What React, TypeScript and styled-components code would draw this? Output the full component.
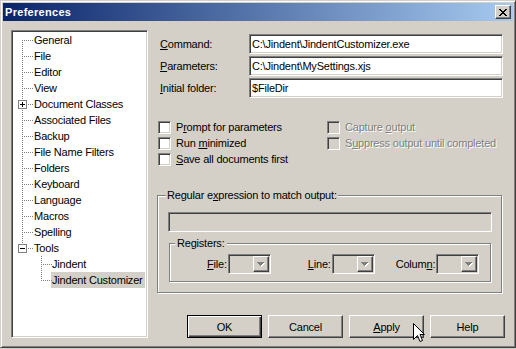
import React from 'react';
import styled, { createGlobalStyle, css } from 'styled-components';

const FACE = '#D4D0C8';
const SHADOW = '#808080';
const DARK = '#404040';
const FONT = '"Liberation Sans", Arial, sans-serif';

const GlobalStyle = createGlobalStyle`
  html, body { margin: 0; padding: 0; background: ${FACE}; }
  body { font-family: ${FONT}; font-size: 11px; color: #000; }
  *, *::before, *::after { box-sizing: border-box; }
`;

const raised = css`
  background: ${FACE};
  border: 1px solid;
  border-color: #fff ${DARK} ${DARK} #fff;
  box-shadow: inset -1px -1px ${SHADOW};
`;

const sunken = css`
  border: 1px solid;
  border-color: ${SHADOW} #fff #fff ${SHADOW};
  box-shadow: inset 1px 1px ${DARK}, inset -1px -1px ${FACE};
`;

const Window = styled.div`
  position: relative;
  width: 516px;
  height: 348px;
  display: flex;
  flex-direction: column;
  background: ${FACE};
  border: 1px solid;
  border-color: ${FACE} ${DARK} ${DARK} ${FACE};
  box-shadow: inset 1px 1px #fff, inset -1px -1px ${SHADOW};
  padding: 2px;
  font-family: ${FONT};
  font-size: 11px;
  letter-spacing: -0.2px;
  color: #000;
`;

const TitleBar = styled.div`
  flex: none;
  height: 18px;
  display: flex;
  align-items: center;
  justify-content: space-between;
  padding: 0 2px;
  background: linear-gradient(to right, #0a246a, #a6caf0);
`;

const Title = styled.span`
  color: #fff;
  font-weight: bold;
  font-size: 11px;
  letter-spacing: 0.3px;
`;

const CloseButton = styled.div`
  ${raised};
  width: 16px;
  height: 14px;
  display: flex;
  align-items: center;
  justify-content: center;
  padding-right: 1px;
`;

const Body = styled.div`
  flex: 1;
  min-height: 0;
  display: flex;
  padding: 9px 10px 7px 8px;
`;

const Tree = styled.div`
  ${sunken};
  flex: none;
  width: 137px;
  background: #fff;
  padding: 1px;
  display: flex;
  flex-direction: column;
`;

type Pos = 'first' | 'middle' | 'last';

const TreeRow = styled.div<{ $level: number }>`
  display: flex;
  height: 16px;
  padding-left: ${(p) => p.$level * 19}px;
`;

const Branch = styled.span<{ $pos: Pos }>`
  position: relative;
  flex: none;
  width: 20px;
  &::before {
    content: '';
    position: absolute;
    left: 9px;
    width: 1px;
    top: ${(p) => (p.$pos === 'first' ? '8px' : '0')};
    bottom: ${(p) => (p.$pos === 'last' ? '7px' : '0')};
    background: repeating-linear-gradient(to bottom, ${SHADOW} 0 1px, transparent 1px 2px);
  }
  &::after {
    content: '';
    position: absolute;
    left: 9px;
    top: 8px;
    width: 11px;
    height: 1px;
    background: repeating-linear-gradient(to right, ${SHADOW} 0 1px, transparent 1px 2px);
  }
`;

const Expander = styled.span<{ $open: boolean }>`
  position: absolute;
  left: 5px;
  top: 4px;
  width: 9px;
  height: 9px;
  border: 1px solid ${SHADOW};
  background: #fff;
  z-index: 1;
  &::before {
    content: '';
    position: absolute;
    left: 1px;
    top: 3px;
    width: 5px;
    height: 1px;
    background: #000;
  }
  &::after {
    content: '';
    position: absolute;
    left: 3px;
    top: 1px;
    width: 1px;
    height: 5px;
    background: #000;
    display: ${(p) => (p.$open ? 'none' : 'block')};
  }
`;

const TreeLabel = styled.span<{ $selected?: boolean; $level: number }>`
  height: 16px;
  line-height: 16px;
  padding: 0 2px 0 1px;
  margin-left: ${(p) => (p.$level ? -1 : 0)}px;
  white-space: nowrap;
  background: ${(p) => (p.$selected ? FACE : 'transparent')};
`;

const Main = styled.div`
  flex: 1;
  min-width: 0;
  margin-left: 9px;
  display: flex;
  flex-direction: column;
`;

const FieldGrid = styled.div`
  margin-top: 4px;
  display: grid;
  grid-template-columns: 92px 1fr;
  grid-auto-rows: 20px;
  row-gap: 2px;
  align-items: center;
`;

const FieldLabel = styled.label`
  padding-left: 3px;
  white-space: nowrap;
`;

const Mn = styled.span`
  text-decoration: underline;
  text-underline-offset: 1px;
`;

const TextBox = styled.input<{ $disabled?: boolean }>`
  ${sunken};
  width: 100%;
  height: 20px;
  margin: 0;
  padding: 0 2px;
  font-family: ${FONT};
  font-size: 11px;
  letter-spacing: -0.2px;
  color: #000;
  background: ${(p) => (p.$disabled ? FACE : '#fff')};
  outline: none;
`;

const CheckGrid = styled.div`
  margin-top: 21px;
  display: grid;
  grid-template-columns: 169px 1fr;
  grid-template-rows: repeat(3, 16px);
  grid-auto-flow: column;
`;

const CheckItem = styled.label<{ $disabled?: boolean }>`
  display: flex;
  align-items: center;
  gap: 5px;
  margin-left: 1px;
  white-space: nowrap;
  color: ${(p) => (p.$disabled ? SHADOW : '#000')};
  text-shadow: ${(p) => (p.$disabled ? '1px 1px 0 #fff' : 'none')};
`;

const CheckBox = styled.span<{ $disabled?: boolean }>`
  ${sunken};
  flex: none;
  width: 13px;
  height: 13px;
  background: ${(p) => (p.$disabled ? FACE : '#fff')};
`;

const GroupBox = styled.fieldset`
  margin: 22px 1px 0 0;
  padding: 10px 9px 10px 10px;
  border: 1px solid ${SHADOW};
  box-shadow: inset 1px 1px #fff, 1px 1px 0 #fff;
  min-width: 0;
`;

const GroupLegend = styled.legend<{ $offset: number; $pad: number }>`
  margin-left: ${(p) => p.$offset}px;
  padding: 0 ${(p) => p.$pad}px;
  line-height: 13px;
  background: ${FACE};
  white-space: nowrap;
`;

const RegisterBox = styled.fieldset`
  margin: 5px 1px 0 1px;
  padding: 4px 0 7px 0;
  border: 1px solid ${SHADOW};
  box-shadow: inset 1px 1px #fff, 1px 1px 0 #fff;
  min-width: 0;
`;

const RegisterRow = styled.div`
  display: flex;
  align-items: center;
`;

const RegisterField = styled.div<{ $offset: number }>`
  display: flex;
  align-items: center;
  margin-left: ${(p) => p.$offset}px;
`;

const RegisterLabel = styled.label`
  margin-right: 1px;
  white-space: nowrap;
`;

const Combo = styled.div`
  ${sunken};
  width: 43px;
  height: 20px;
  padding: 1px;
  background: ${FACE};
  display: flex;
  justify-content: flex-end;
`;

const ComboButton = styled.span`
  ${raised};
  width: 16px;
  height: 16px;
  display: flex;
  align-items: center;
  justify-content: center;
`;

const ButtonRow = styled.div`
  margin-top: auto;
  margin-right: -2px;
  display: flex;
  justify-content: flex-end;
  gap: 6px;
`;

const Button = styled.button<{ $default?: boolean }>`
  width: 75px;
  height: 23px;
  margin: 0;
  padding: 0;
  font-family: ${FONT};
  font-size: 11px;
  letter-spacing: -0.2px;
  color: #000;
  background: ${FACE};
  ${(p) =>
    p.$default
      ? css`
          border: 1px solid #000;
          box-shadow: inset 1px 1px #fff, inset -1px -1px ${DARK}, inset -2px -2px ${SHADOW};
        `
      : css`
          border: 1px solid;
          border-color: #fff ${DARK} ${DARK} #fff;
          box-shadow: inset -1px -1px ${SHADOW};
        `}
`;

const Cursor = styled.svg`
  position: absolute;
  left: 412px;
  top: 322px;
  pointer-events: none;
`;

const CloseGlyph = () => (
  <svg width="8" height="7" viewBox="0 0 8 7" shapeRendering="crispEdges">
    <path
      d="M0 0h2v1H0zM6 0h2v1H6zM1 1h2v1H1zM5 1h2v1H5zM2 2h4v1H2zM3 3h2v1H3zM2 4h4v1H2zM1 5h2v1H1zM5 5h2v1H5zM0 6h2v1H0zM6 6h2v1H6z"
      fill="#000"
    />
  </svg>
);

const DisabledArrow = () => (
  <svg width="8" height="5" viewBox="0 0 8 5" shapeRendering="crispEdges">
    <path d="M1 1h7v1H1zM2 2h5v1H2zM3 3h3v1H3zM4 4h1v1H4z" fill="#fff" />
    <path d="M0 0h7v1H0zM1 1h5v1H1zM2 2h3v1H2zM3 3h1v1H3z" fill={SHADOW} />
  </svg>
);

type TreeItem = {
  label: string;
  level?: number;
  pos?: Pos;
  exp?: 'plus' | 'minus';
  selected?: boolean;
};

const treeItems: TreeItem[] = [
  { label: 'General', pos: 'first' },
  { label: 'File' },
  { label: 'Editor' },
  { label: 'View' },
  { label: 'Document Classes', exp: 'plus' },
  { label: 'Associated Files' },
  { label: 'Backup' },
  { label: 'File Name Filters' },
  { label: 'Folders' },
  { label: 'Keyboard' },
  { label: 'Language' },
  { label: 'Macros' },
  { label: 'Spelling' },
  { label: 'Tools', pos: 'last', exp: 'minus' },
  { label: 'Jindent', level: 1 },
  { label: 'Jindent Customizer', level: 1, pos: 'last', selected: true },
];

export default function App() {
  return (
    <>
      <GlobalStyle />
      <Window>
        <TitleBar>
          <Title>Preferences</Title>
          <CloseButton>
            <CloseGlyph />
          </CloseButton>
        </TitleBar>
        <Body>
          <Tree>
            {treeItems.map((it) => (
              <TreeRow key={it.label} $level={it.level ?? 0}>
                <Branch $pos={it.pos ?? 'middle'}>
                  {it.exp && <Expander $open={it.exp === 'minus'} />}
                </Branch>
                <TreeLabel $level={it.level ?? 0} $selected={it.selected}>
                  {it.label}
                </TreeLabel>
              </TreeRow>
            ))}
          </Tree>
          <Main>
            <FieldGrid>
              <FieldLabel>
                <Mn>C</Mn>ommand:
              </FieldLabel>
              <TextBox readOnly defaultValue="C:\Jindent\JindentCustomizer.exe" />
              <FieldLabel>
                <Mn>P</Mn>arameters:
              </FieldLabel>
              <TextBox readOnly defaultValue="C:\Jindent\MySettings.xjs" />
              <FieldLabel>
                <Mn>I</Mn>nitial folder:
              </FieldLabel>
              <TextBox readOnly defaultValue="$FileDir" />
            </FieldGrid>
            <CheckGrid>
              <CheckItem>
                <CheckBox />
                <span>
                  P<Mn>r</Mn>ompt for parameters
                </span>
              </CheckItem>
              <CheckItem>
                <CheckBox />
                <span>
                  Run <Mn>m</Mn>inimized
                </span>
              </CheckItem>
              <CheckItem>
                <CheckBox />
                <span>
                  <Mn>S</Mn>ave all documents first
                </span>
              </CheckItem>
              <CheckItem $disabled>
                <CheckBox $disabled />
                <span>
                  Capture <Mn>o</Mn>utput
                </span>
              </CheckItem>
              <CheckItem $disabled>
                <CheckBox $disabled />
                <span>
                  S<Mn>u</Mn>ppress output until completed
                </span>
              </CheckItem>
            </CheckGrid>
            <GroupBox>
              <GroupLegend $offset={-2} $pad={1}>
                Regular e<Mn>x</Mn>pression to match output:
              </GroupLegend>
              <TextBox readOnly $disabled defaultValue="" />
              <RegisterBox>
                <GroupLegend $offset={5} $pad={2}>
                  Registers:
                </GroupLegend>
                <RegisterRow>
                  <RegisterField $offset={37}>
                    <RegisterLabel>
                      <Mn>F</Mn>ile:
                    </RegisterLabel>
                    <Combo>
                      <ComboButton>
                        <DisabledArrow />
                      </ComboButton>
                    </Combo>
                  </RegisterField>
                  <RegisterField $offset={37}>
                    <RegisterLabel>
                      <Mn>L</Mn>ine:
                    </RegisterLabel>
                    <Combo>
                      <ComboButton>
                        <DisabledArrow />
                      </ComboButton>
                    </Combo>
                  </RegisterField>
                  <RegisterField $offset={21}>
                    <RegisterLabel>
                      Colum<Mn>n</Mn>:
                    </RegisterLabel>
                    <Combo>
                      <ComboButton>
                        <DisabledArrow />
                      </ComboButton>
                    </Combo>
                  </RegisterField>
                </RegisterRow>
              </RegisterBox>
            </GroupBox>
            <ButtonRow>
              <Button $default>OK</Button>
              <Button>Cancel</Button>
              <Button>
                <Mn>A</Mn>pply
              </Button>
              <Button>Help</Button>
            </ButtonRow>
          </Main>
        </Body>
        <Cursor width="13" height="21" viewBox="0 0 13 21">
          <path
            d="M0.5 0.5 L0.5 16.5 L4.5 12.5 L7 18.5 L9.5 17.5 L7 11.5 L11.5 11.5 Z"
            fill="#fff"
            stroke="#000"
            strokeWidth="1"
            strokeLinejoin="miter"
          />
        </Cursor>
      </Window>
    </>
  );
}
